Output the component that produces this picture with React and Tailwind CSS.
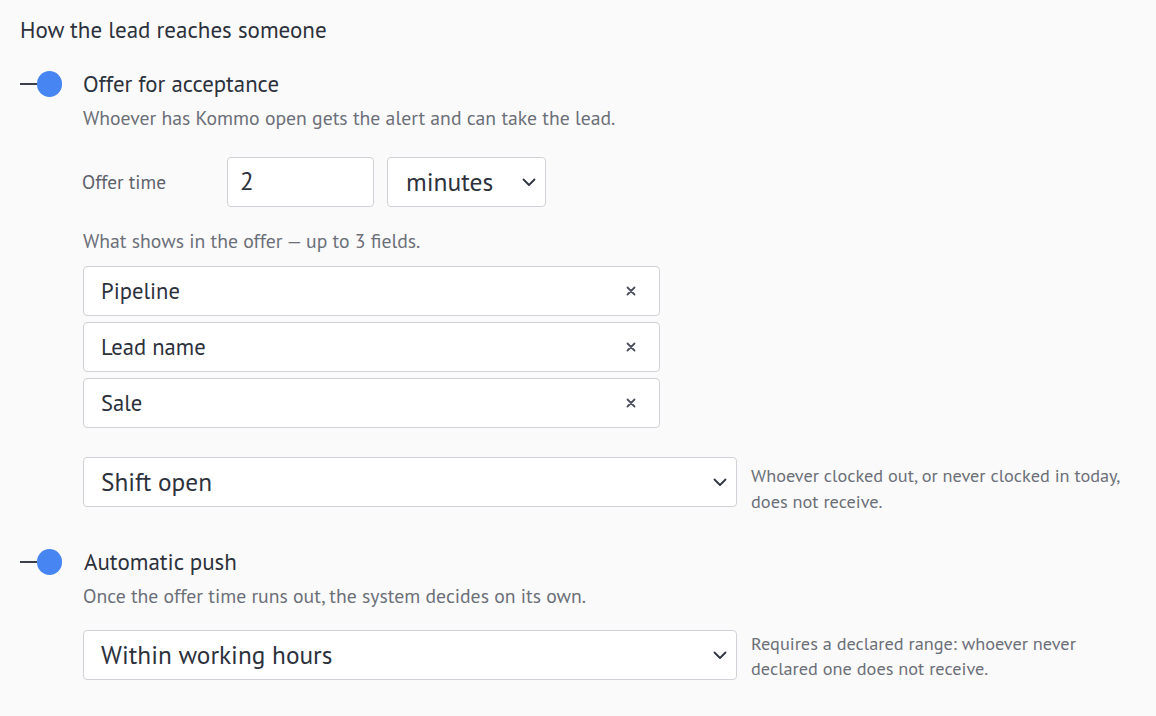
import React from "react";

const Toggle = () => (
  <div className="flex items-center w-[42px] shrink-0">
    <div className="w-[17px] h-[2px] bg-[#3a3f4b]" />
    <div className="w-[26px] h-[26px] rounded-full bg-[#4786f2]" />
  </div>
);

const Chevron = () => (
  <svg width="14" height="9" viewBox="0 0 14 9" fill="none">
    <path d="M1.5 1.5L7 7L12.5 1.5" stroke="#2f3441" strokeWidth="1.8" strokeLinecap="round" strokeLinejoin="round" />
  </svg>
);

const Cross = () => (
  <svg width="10" height="10" viewBox="0 0 10 10" fill="none">
    <path d="M1.5 1.5L8.5 8.5M8.5 1.5L1.5 8.5" stroke="#4b505c" strokeWidth="1.8" strokeLinecap="round" />
  </svg>
);

const Field = ({ label }) => (
  <div className="flex items-center justify-between h-[50px] w-[577px] bg-white border border-[#cfd2d6] rounded-[4px] pl-[17px] pr-[23px] text-[22.6px] text-[#2c313c]">
    <span>{label}</span>
    <Cross />
  </div>
);

const Select = ({ label, note, notePad, noteLh }) => (
  <div className="flex items-start gap-[14px]">
    <div className="flex items-center justify-between h-[50px] w-[654px] shrink-0 bg-white border border-[#cfd2d6] rounded-[4px] pl-[17px] pr-[9px] text-[25.3px] text-[#2c313c]">
      <span>{label}</span>
      <Chevron />
    </div>
    <div className={`${notePad} ${noteLh} text-[18.3px] text-[#6b6f78]`}>{note}</div>
  </div>
);

export default function App() {
  return (
    <div
      className="w-full h-[716px] bg-[#fafafa] pl-[20px] pt-[16px] text-[#2c313c]"
      style={{ fontFamily: '"PT Sans", "Noto Sans", sans-serif' }}
    >
      <div className="text-[23px] leading-[28px]">How the lead reaches someone</div>

      <div className="mt-[26px] flex items-center gap-[21px]">
        <Toggle />
        <div className="text-[22.8px] leading-[28px]">Offer for acceptance</div>
      </div>

      <div className="pl-[63px]">
        <div className="mt-[8px] text-[19.7px] leading-[24px] text-[#6b6f78]">
          Whoever has Kommo open gets the alert and can take the lead.
        </div>

        <div className="mt-[27px] flex items-center">
          <div className="w-[145px] text-[19.3px] text-[#5d616b] -ml-[1px]">Offer time</div>
          <div className="h-[50px] w-[147px] bg-white border border-[#cfd2d6] rounded-[4px] flex items-center pl-[12px] text-[25px]">
            2
          </div>
          <div className="ml-[13px] h-[50px] w-[159px] bg-white border border-[#cfd2d6] rounded-[4px] flex items-center justify-between pl-[18px] pr-[9px] text-[25.5px]">
            <span>minutes</span>
            <Chevron />
          </div>
        </div>

        <div className="mt-[22px] text-[19.7px] leading-[24px] text-[#6b6f78]">
          What shows in the offer — up to 3 fields.
        </div>

        <div className="mt-[13px] flex flex-col gap-[6px]">
          <Field label="Pipeline" />
          <Field label="Lead name" />
          <Field label="Sale" />
        </div>

        <div className="mt-[29px]">
          <Select
            label="Shift open"
            notePad="pt-[5px]"
            noteLh="leading-[26px]"
            note={
              <>
                Whoever clocked out, or never clocked in today,
                <br />
                does not receive.
              </>
            }
          />
        </div>
      </div>

      <div className="mt-[34px] flex items-center gap-[22px]">
        <Toggle />
        <div className="text-[23px] leading-[28px]">Automatic push</div>
      </div>

      <div className="pl-[63px]">
        <div className="mt-[8px] text-[19.7px] leading-[24px] text-[#6b6f78]">
          Once the offer time runs out, the system decides on its own.
        </div>
        <div className="mt-[22px]">
          <Select
            label="Within working hours"
            notePad="pt-[1px]"
            noteLh="leading-[25px]"
            note={
              <>
                Requires a declared range: whoever never
                <br />
                declared one does not receive.
              </>
            }
          />
        </div>
      </div>
    </div>
  );
}
